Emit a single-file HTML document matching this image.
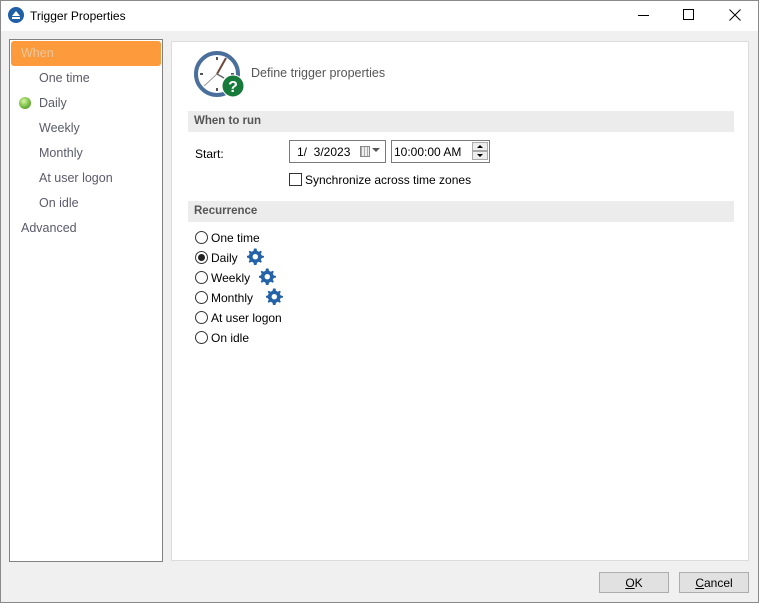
<!DOCTYPE html>
<html><head><style>
*{box-sizing:border-box}
body{margin:0;width:759px;height:603px;overflow:hidden;font-family:"Liberation Sans",sans-serif;font-size:12px;color:#000;position:relative;background:#f0f0f0}
.frame{position:absolute;left:0;top:0;width:759px;height:603px;border:1px solid #8a8a8a;z-index:5;pointer-events:none}
.title{position:absolute;left:0;top:0;width:759px;height:31px;background:#fff}
.abs{position:absolute}
.left{left:9px;top:39px;width:154px;height:523px;background:#fff;border:1px solid #828282}
.nav{position:absolute;font-size:12.5px;color:#5a5a6a}
.right{left:171px;top:41px;width:578px;height:520px;background:#fff;border:1px solid #dcdcdc}
.hdr{position:absolute;left:188px;width:546px;height:21px;background:#ececec;font-weight:bold;color:#555;padding:4px 0 0 6px;font-size:11.5px}
.radio{position:absolute;width:13px;height:13px;border:1px solid #333;border-radius:50%;background:#fff}
.rl{position:absolute;font-size:12px}
.btn{position:absolute;top:572px;width:70px;height:21px;background:#e1e1e1;border:1px solid #adadad;text-align:center;padding-top:3px;font-size:12px}
</style></head><body>
<div class="frame"></div>
<div class="title">
<svg class="abs" style="left:8px;top:7px" width="16" height="16"><circle cx="8" cy="8" r="8" fill="#1f5fa6"/><path d="M4 9 L8 4 L12 9Z" fill="#fff"/><rect x="4" y="10" width="8" height="2" fill="#fff"/></svg>
<div class="abs" style="left:30px;top:9px;font-size:12px">Trigger Properties</div>
<div class="abs" style="left:638px;top:15px;width:11px;height:1px;background:#000"></div>
<div class="abs" style="left:683px;top:9px;width:11px;height:11px;border:1px solid #000"></div>
<svg class="abs" style="left:729px;top:9px" width="12" height="12"><path d="M0.5 0.5L11.5 11.5M11.5 0.5L0.5 11.5" stroke="#000" stroke-width="1"/></svg>
</div>

<div class="abs left"></div>
<div class="abs" style="left:11px;top:41px;width:150px;height:25px;background:#fd9a3b;border-radius:3px"></div>
<div class="nav" style="left:21px;top:46px;color:#e8c8a0">When</div>
<div class="nav" style="left:39px;top:71px">One time</div>
<div class="abs" style="left:19px;top:97px;width:12px;height:12px;border-radius:50%;background:radial-gradient(circle at 40% 35%,#d6f5a0,#6db33a 60%,#4a8a25)"></div>
<div class="nav" style="left:39px;top:96px">Daily</div>
<div class="nav" style="left:39px;top:121px">Weekly</div>
<div class="nav" style="left:39px;top:146px">Monthly</div>
<div class="nav" style="left:39px;top:171px">At user logon</div>
<div class="nav" style="left:39px;top:196px">On idle</div>
<div class="nav" style="left:21px;top:221px">Advanced</div>

<div class="abs right"></div>
<svg class="abs" style="left:192px;top:48px" width="56" height="52">
<circle cx="25" cy="26" r="21" fill="#fff" stroke="#4a6f9c" stroke-width="4"/>
<path d="M25 9v3M25 40v3M8 26h3M39 26h3" stroke="#555" stroke-width="2"/>
<path d="M25 26L34 10" stroke="#6b4a3a" stroke-width="2"/>
<path d="M25 26L12 38" stroke="#999" stroke-width="1"/>
<path d="M25 26L32 30" stroke="#666" stroke-width="1.5"/>
<circle cx="41" cy="38" r="11" fill="#17793a" stroke="#fff" stroke-width="1"/>
<text x="41" y="44" font-size="16" font-weight="bold" fill="#fff" text-anchor="middle" font-family="Liberation Sans">?</text>
</svg>
<div class="abs" style="left:251px;top:66px;font-size:12.5px;color:#555">Define trigger properties</div>

<div class="hdr" style="top:111px">When to run</div>
<div class="abs" style="left:195px;top:147px">Start:</div>
<div class="abs" style="left:289px;top:140px;width:97px;height:23px;background:#fff;border:1px solid #7a7a7a"></div>
<div class="abs" style="left:297px;top:145px">1/&nbsp; 3/2023</div>
<div class="abs" style="left:360px;top:146px;width:10px;height:11px;border:1px solid #888;background:repeating-linear-gradient(90deg,#aaa 0 1px,#eee 1px 3px)"></div>
<svg class="abs" style="left:372px;top:148px" width="8" height="5"><path d="M0 0h8L4 4z" fill="#555"/></svg>
<div class="abs" style="left:391px;top:140px;width:99px;height:23px;background:#fff;border:1px solid #7a7a7a"></div>
<div class="abs" style="left:394px;top:145px">10:00:00 AM</div>
<div class="abs" style="left:472px;top:142px;width:16px;height:9px;border:1px solid #aaa;background:#eee"></div>
<div class="abs" style="left:472px;top:151px;width:16px;height:9px;border:1px solid #aaa;background:#eee"></div>
<svg class="abs" style="left:476px;top:144px" width="8" height="14"><path d="M1 4h6L4 1z M1 10h6L4 13z" fill="#000"/></svg>
<div class="abs" style="left:289px;top:173px;width:13px;height:13px;border:1px solid #333;background:#fff"></div>
<div class="abs" style="left:305px;top:173px">Synchronize across time zones</div>

<div class="hdr" style="top:201px">Recurrence</div>
<div class="radio" style="left:195px;top:231px"></div><div class="rl" style="left:211px;top:231px">One time</div>
<div class="radio" style="left:195px;top:251px"></div><div class="abs" style="left:198px;top:254px;width:7px;height:7px;border-radius:50%;background:#222"></div><div class="rl" style="left:211px;top:251px">Daily</div>
<div class="radio" style="left:195px;top:271px"></div><div class="rl" style="left:211px;top:271px">Weekly</div>
<div class="radio" style="left:195px;top:291px"></div><div class="rl" style="left:211px;top:291px">Monthly</div>
<div class="radio" style="left:195px;top:311px"></div><div class="rl" style="left:211px;top:311px">At user logon</div>
<div class="radio" style="left:195px;top:331px"></div><div class="rl" style="left:211px;top:331px">On idle</div>

<svg width="0" height="0" style="position:absolute"><defs><g id="g"><path d="M8 0.5l1.5 0 .5 2.2 1.8 1 2-1 1 1-1 2 1 1.8 2.2.5v1.5l-2.2.5-1 1.8 1 2-1 1-2-1-1.8 1-.5 2.2H7l-.5-2.2-1.8-1-2 1-1-1 1-2-1-1.8L-.5 9.5V8l2.2-.5 1-1.8-1-2 1-1 2 1 1.8-1L7 .5z" fill="#2563a8"/><circle cx="8.3" cy="8.7" r="2.7" fill="#fff"/></g></defs></svg>
<svg class="abs" style="left:247px;top:248px" width="18" height="18"><use href="#g"/></svg>
<svg class="abs" style="left:259px;top:268px" width="18" height="18"><use href="#g"/></svg>
<svg class="abs" style="left:266px;top:288px" width="18" height="18"><use href="#g"/></svg>

<div class="btn" style="left:599px"><u>O</u>K</div>
<div class="btn" style="left:679px"><u>C</u>ancel</div>
</body></html>
